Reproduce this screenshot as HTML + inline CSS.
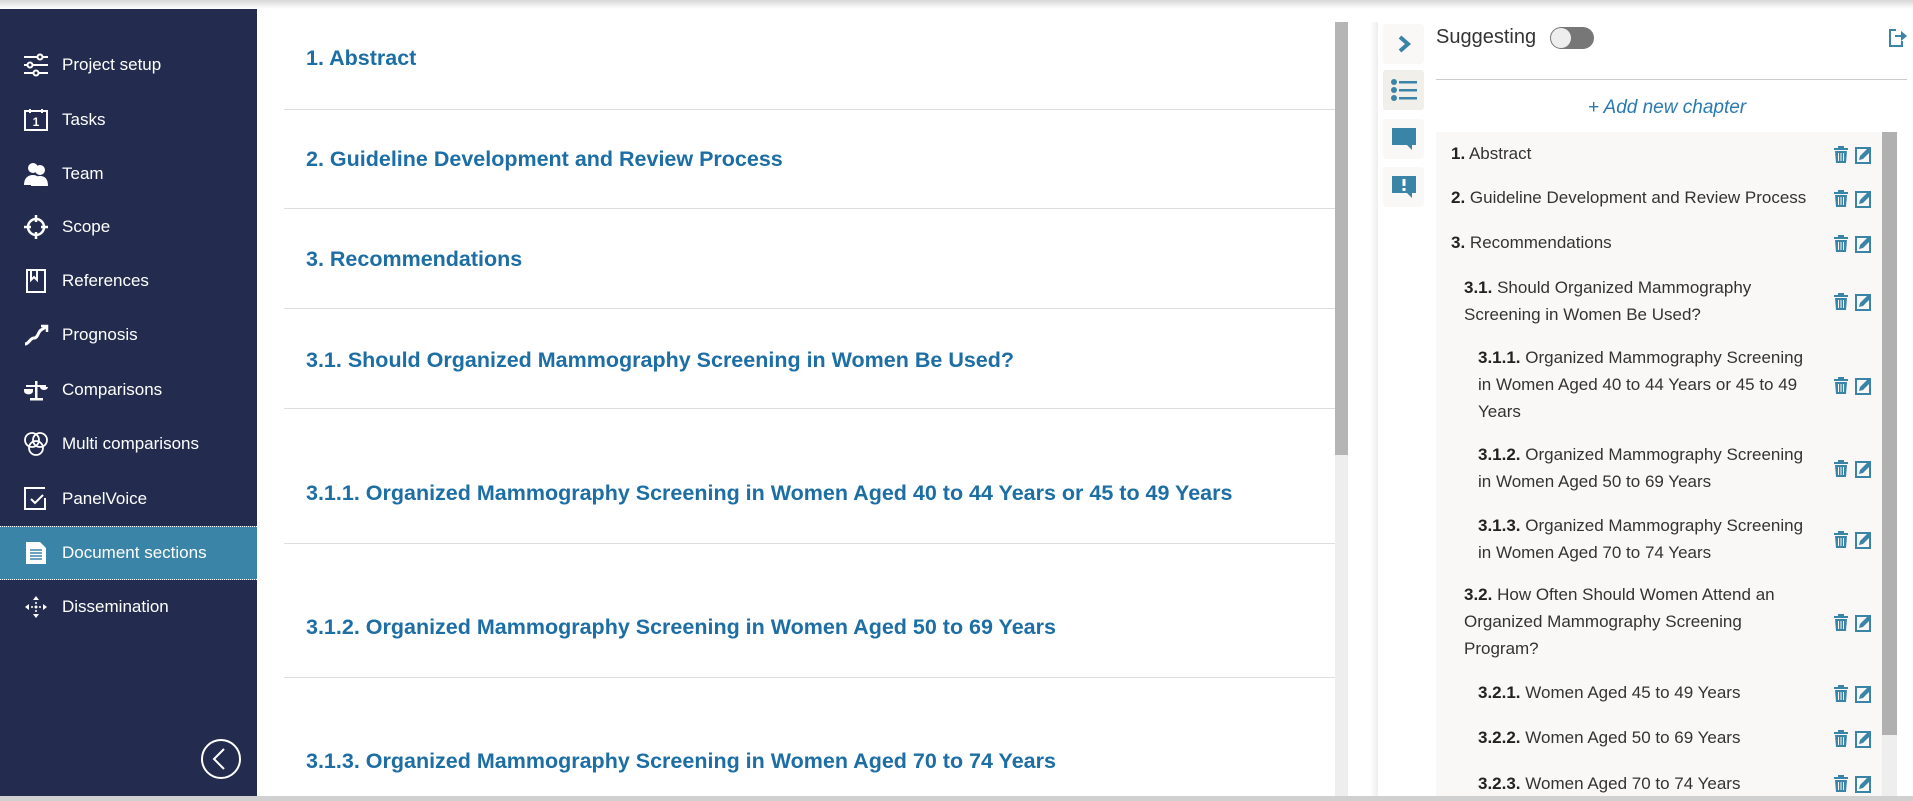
<!DOCTYPE html>
<html><head><meta charset="utf-8"><style>
*{box-sizing:border-box;margin:0;padding:0}
body{width:1913px;height:801px;overflow:hidden;background:#fff;font-family:"Liberation Sans",sans-serif;position:relative}
.topsh{position:absolute;left:0;top:0;width:1913px;height:9px;background:linear-gradient(#d8d8d8,#fff);z-index:5}
.side{position:absolute;left:0;top:0;width:257px;height:797px;background:#232c4f}
.nav{position:absolute;left:0;width:257px;height:54px;display:flex;align-items:center;color:#fff;font-size:17px}
.nav svg{position:absolute;left:23px;width:26px;height:26px}
.nav span{position:absolute;left:62px}
.nav.act{background:#3a84a8;border-top:1px dotted #fff;border-bottom:1px dotted #fff}
.bot{position:absolute;left:0;top:796px;width:1913px;height:5px;background:#d0d0d0}
.h{position:absolute;left:306px;color:#1c6ea4;font-weight:bold;font-size:21.5px;white-space:nowrap}
.dv{position:absolute;left:284px;width:1051px;height:1px;background:#ddd}
.sb{position:absolute;left:1335px;top:22px;width:13px;height:774px;background:#eee}
.sb div{width:13px;height:433px;background:#b5b5b5}
.rsh{position:absolute;left:1370px;top:22px;width:8px;height:774px;background:linear-gradient(90deg,#fff,#eee)}
.ib{position:absolute;left:1383px;width:41px;height:40px;background:#f9f8f7;border-radius:3px;display:flex;align-items:center;justify-content:center}
.list{position:absolute;left:1436px;top:132px;width:446px;height:664px;background:#f9f8f7;overflow:hidden}
.it{position:absolute;font-size:17px;color:#333;line-height:27px}
.it b{color:#222}
.ic{position:absolute;left:1832px;width:50px;height:20px}
</style></head><body>
<div class="topsh"></div>
<div class="side">
<div class="nav" style="top:38px"><svg viewBox="0 0 26 26" fill="none" stroke="#fff" stroke-width="2"><path d="M1 5h24M1 13h24M1 21h24"/><circle cx="17" cy="5" r="2.5" fill="#232c4f"/><circle cx="7" cy="13" r="2.5" fill="#232c4f"/><circle cx="13" cy="21" r="2.5" fill="#232c4f"/></svg><span>Project setup</span></div>
<div class="nav" style="top:93px"><svg viewBox="0 0 26 26" fill="none" stroke="#fff" stroke-width="2"><rect x="2" y="4" width="22" height="19"/><path d="M7 2v4M19 2v4"/><text x="13" y="19" fill="#fff" stroke="none" font-size="12" font-weight="bold" text-anchor="middle" font-family="Liberation Sans">1</text></svg><span>Tasks</span></div>
<div class="nav" style="top:147px"><svg viewBox="0 0 26 26" fill="#fff"><circle cx="10" cy="7" r="5"/><circle cx="17" cy="9" r="5"/><path d="M1 24c0-7 4-10 9-10s7 3 7 10z"/><path d="M8 25c0-7 4-10 9-10s8 3 8 10z"/></svg><span>Team</span></div>
<div class="nav" style="top:200px"><svg viewBox="0 0 26 26" fill="none" stroke="#fff" stroke-width="2.5"><circle cx="13" cy="13" r="8"/><path d="M13 1v7M13 18v7M1 13h7M18 13h7"/></svg><span>Scope</span></div>
<div class="nav" style="top:254px"><svg viewBox="0 0 26 26" fill="none" stroke="#fff" stroke-width="2"><rect x="4" y="2" width="18" height="22"/><path d="M8 3v9l3-3 3 3V3" /></svg><span>References</span></div>
<div class="nav" style="top:308px"><svg viewBox="0 0 26 26" fill="none" stroke="#fff" stroke-width="3"><path d="M2 22c4 0 5-6 9-6s4-6 7-8l5-3"/><path d="M18 4h6v6" stroke-width="2.5"/></svg><span>Prognosis</span></div>
<div class="nav" style="top:363px"><svg viewBox="0 0 26 26" fill="#fff"><rect x="12" y="4" width="2.5" height="18"/><rect x="7" y="21" width="13" height="2.5"/><path d="M1 12h9v2a4 3 0 0 1-9 0z"/><rect x="3" y="8" width="20" height="2"/><path d="M17 10h8a4 3 0 0 1-8 0z"/></svg><span>Comparisons</span></div>
<div class="nav" style="top:417px"><svg viewBox="0 0 26 26" fill="none" stroke="#fff" stroke-width="1.8"><circle cx="9" cy="9" r="7"/><circle cx="17" cy="9" r="7"/><circle cx="13" cy="17" r="7"/></svg><span>Multi comparisons</span></div>
<div class="nav" style="top:472px"><svg viewBox="0 0 26 26" fill="none" stroke="#fff" stroke-width="2"><path d="M22 12v11H2V2h20"/><path d="M8 13l4 4 8-8"/></svg><span>PanelVoice</span></div>
<div class="nav act" style="top:526px"><svg viewBox="0 0 26 26"><path d="M3 2h14l6 6v16H3z" fill="#fff"/><path d="M7 10h12M7 13h12M7 16h12M7 19h12" stroke="#3a84a8" stroke-width="1.5"/></svg><span>Document sections</span></div>
<div class="nav" style="top:580px"><svg viewBox="0 0 26 26" fill="#fff"><path d="M13 2l3 4h-6zM13 24l3-4h-6zM2 13l4-3v6zM24 13l-4-3v6z"/><circle cx="13" cy="13" r="1.5"/><circle cx="13" cy="9" r="1"/><circle cx="13" cy="17" r="1"/><circle cx="9" cy="13" r="1"/><circle cx="17" cy="13" r="1"/></svg><span>Dissemination</span></div>
<svg style="position:absolute;left:200px;top:738px" width="42" height="42" viewBox="0 0 42 42" fill="none" stroke="#fff" stroke-width="2"><circle cx="21" cy="21" r="19"/><path d="M24 11L14 21l10 10"/></svg>
</div>
<div class="h" style="top:46px">1. Abstract</div>
<div class="dv" style="top:109px"></div>
<div class="h" style="top:147px">2. Guideline Development and Review Process</div>
<div class="dv" style="top:208px"></div>
<div class="h" style="top:247px">3. Recommendations</div>
<div class="dv" style="top:308px"></div>
<div class="h" style="top:348px">3.1. Should Organized Mammography Screening in Women Be Used?</div>
<div class="dv" style="top:408px"></div>
<div class="h" style="top:481px">3.1.1. Organized Mammography Screening in Women Aged 40 to 44 Years or 45 to 49 Years</div>
<div class="dv" style="top:543px"></div>
<div class="h" style="top:615px">3.1.2. Organized Mammography Screening in Women Aged 50 to 69 Years</div>
<div class="dv" style="top:677px"></div>
<div class="h" style="top:749px">3.1.3. Organized Mammography Screening in Women Aged 70 to 74 Years</div>
<div class="sb"><div></div></div>
<div class="rsh"></div>
<div class="ib" style="top:24px"><svg width="16" height="20" viewBox="0 0 16 20"><path d="M4 3l8 7-8 7" fill="none" stroke="#3a84a8" stroke-width="4"/></svg></div>
<div class="ib" style="top:70px;background:#f1efea"><svg width="28" height="24" viewBox="0 0 28 24" fill="#3a84a8"><circle cx="4" cy="4" r="3"/><circle cx="4" cy="12" r="3"/><circle cx="4" cy="20" r="3"/><rect x="9" y="3" width="18" height="2.5"/><rect x="9" y="11" width="18" height="2.5"/><rect x="9" y="19" width="18" height="2.5"/></svg></div>
<div class="ib" style="top:119px"><svg width="26" height="24" viewBox="0 0 26 24" fill="#3a84a8"><path d="M1 1h24v17h-4v5l-5-5H1z"/></svg></div>
<div class="ib" style="top:167px"><svg width="26" height="24" viewBox="0 0 26 24"><path d="M1 1h24v17h-4v5l-5-5H1z" fill="#3a84a8"/><rect x="11.5" y="4" width="3" height="7" fill="#fff"/><rect x="11.5" y="13" width="3" height="3" fill="#fff"/></svg></div>
<div style="position:absolute;left:1436px;top:26px;font-size:20px;color:#333">Suggesting</div>
<div style="position:absolute;left:1550px;top:27px;width:44px;height:22px;border-radius:11px;background:#777"><div style="position:absolute;left:1px;top:1px;width:20px;height:20px;border-radius:50%;background:#eee"></div></div>
<svg style="position:absolute;left:1888px;top:27px" width="20" height="22" viewBox="0 0 20 22"><path d="M8 3H2v16h12v-5" fill="none" stroke="#3a84a8" stroke-width="2"/><path d="M7 8h6V4l6 5-6 5v-4H7z" fill="#3a84a8"/></svg>
<div style="position:absolute;left:1436px;top:79px;width:471px;height:1px;background:#ccc"></div>
<div style="position:absolute;left:1436px;top:97px;width:462px;text-align:center;font-size:19px;font-style:italic;color:#2a7ab0">+ Add new chapter</div>
<div class="list"></div>
<div style="position:absolute;left:1882px;top:132px;width:15px;height:664px;background:#eee"><div style="height:603px;background:#b0b0b0"></div></div>
<div class="it" style="left:1451px;top:140px"><b>1.</b> Abstract</div>
<div class="it" style="left:1451px;top:184px"><b>2.</b> Guideline Development and Review Process</div>
<div class="it" style="left:1451px;top:229px"><b>3.</b> Recommendations</div>
<div class="it" style="left:1464px;top:274px"><b>3.1.</b> Should Organized Mammography<br>Screening in Women Be Used?</div>
<div class="it" style="left:1478px;top:344px"><b>3.1.1.</b> Organized Mammography Screening<br>in Women Aged 40 to 44 Years or 45 to 49<br>Years</div>
<div class="it" style="left:1478px;top:441px"><b>3.1.2.</b> Organized Mammography Screening<br>in Women Aged 50 to 69 Years</div>
<div class="it" style="left:1478px;top:512px"><b>3.1.3.</b> Organized Mammography Screening<br>in Women Aged 70 to 74 Years</div>
<div class="it" style="left:1464px;top:581px"><b>3.2.</b> How Often Should Women Attend an<br>Organized Mammography Screening<br>Program?</div>
<div class="it" style="left:1478px;top:679px"><b>3.2.1.</b> Women Aged 45 to 49 Years</div>
<div class="it" style="left:1478px;top:724px"><b>3.2.2.</b> Women Aged 50 to 69 Years</div>
<div class="it" style="left:1478px;top:770px"><b>3.2.3.</b> Women Aged 70 to 74 Years</div>
<svg width="0" height="0" style="position:absolute"><defs><g id="ie"><path d="M2 3h14v2H2zM6 1h6v2H6zM3 6h12l-1 12H4z" fill="#3a84a8"/><path d="M6.5 8v8M9 8v8M11.5 8v8" stroke="#f9f8f7" stroke-width="1"/><rect x="24" y="3" width="14" height="15" fill="none" stroke="#3a84a8" stroke-width="2"/><path d="M27 15l1-4 8-8 3 3-8 8z" fill="#3a84a8"/></g></defs></svg>
<svg class="ic" style="top:145px" viewBox="0 0 50 20"><use href="#ie"/></svg>
<svg class="ic" style="top:189px" viewBox="0 0 50 20"><use href="#ie"/></svg>
<svg class="ic" style="top:234px" viewBox="0 0 50 20"><use href="#ie"/></svg>
<svg class="ic" style="top:292px" viewBox="0 0 50 20"><use href="#ie"/></svg>
<svg class="ic" style="top:376px" viewBox="0 0 50 20"><use href="#ie"/></svg>
<svg class="ic" style="top:459px" viewBox="0 0 50 20"><use href="#ie"/></svg>
<svg class="ic" style="top:530px" viewBox="0 0 50 20"><use href="#ie"/></svg>
<svg class="ic" style="top:613px" viewBox="0 0 50 20"><use href="#ie"/></svg>
<svg class="ic" style="top:684px" viewBox="0 0 50 20"><use href="#ie"/></svg>
<svg class="ic" style="top:729px" viewBox="0 0 50 20"><use href="#ie"/></svg>
<svg class="ic" style="top:774px" viewBox="0 0 50 20"><use href="#ie"/></svg>
<div class="bot"></div>
</body></html>
